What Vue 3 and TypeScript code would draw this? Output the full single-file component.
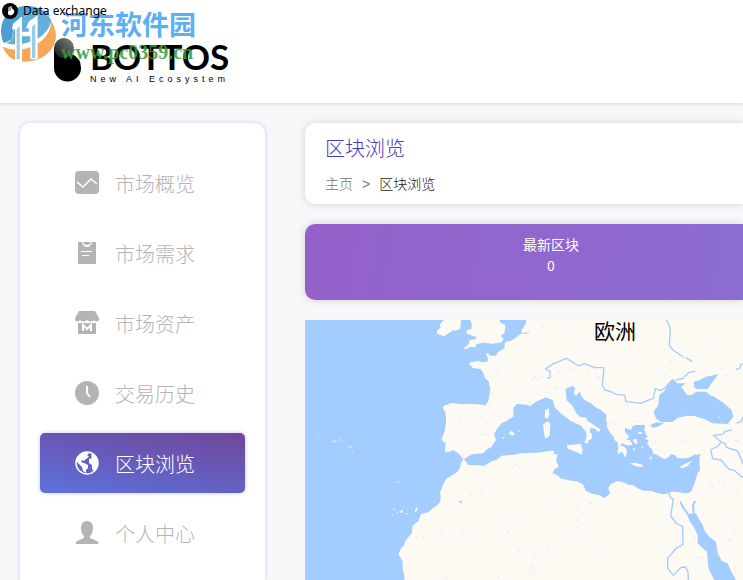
<script setup lang="ts">
interface NavItem {
  label: string
  icon: 'chart' | 'clipboard' | 'shop' | 'clock' | 'globe' | 'user'
}

const navItems: NavItem[] = [
  { label: '市场概览', icon: 'chart' },
  { label: '市场需求', icon: 'clipboard' },
  { label: '市场资产', icon: 'shop' },
  { label: '交易历史', icon: 'clock' },
  { label: '区块浏览', icon: 'globe' },
  { label: '个人中心', icon: 'user' },
]

const current = '区块浏览'
const latestBlock = 0

// Small lakes, as x, y pairs in map units
const lakes: [number, number][] = [
  [434, 286], [463, 304], [502, 262], [524, 288], [552, 282], [434, 332], [482, 350], [498, 324],
  [506, 371], [524, 322], [535, 340], [545, 342], [446, 367], [473, 402], [555, 214], [560, 222],
  [573, 161], [588, 281], [525, 509], [495, 524], [498, 530], [410, 569], [374, 599], [398, 623],
  [406, 632], [334, 650], [353, 650], [470, 629], [500, 622], [632, 595], [596, 574], [608, 636],
  [322, 734], [586, 734], [422, 775], [578, 767], [640, 691], [620, 440], [632, 434], [650, 456],
  [676, 456], [648, 432], [812, 556], [816, 569], [828, 578], [848, 550], [855, 548], [812, 592],
  [816, 622], [840, 620], [814, 600], [778, 622], [772, 645], [745, 539], [873, 679], [890, 747],
  [726, 674], [692, 689], [687, 702], [685, 732], [678, 740], [682, 759], [688, 751], [671, 760],
  [728, 683], [748, 683], [606, 636], [1168, 650], [1173, 712], [1162, 720], [1184, 710], [1212, 488],
  [1218, 500], [1240, 484], [1256, 497], [1274, 487], [1294, 512], [1284, 616], [1288, 628], [1276, 655],
  [1300, 651], [1270, 660], [1188, 747], [1146, 735], [1140, 362], [1140, 357], [1105, 365], [1100, 355],
  [1050, 362], [1188, 345], [1296, 360], [1290, 362], [1250, 340], [1240, 290], [1200, 90], [1250, 145],
  [1264, 165], [1128, 108], [1096, 122], [960, 137], [920, 95], [1042, 15], [1052, 10], [954, 22],
  [712, 20], [784, 22], [820, 53], [710, 91], [888, 40], [698, 176], [708, 170], [722, 188],
  [752, 199], [720, 215], [744, 215], [745, 202], [762, 150], [756, 157], [788, 147], [800, 145],
  [650, 228], [680, 176], [686, 168], [848, 164], [872, 168], [880, 172], [984, 287], [920, 308],
  [948, 295], [930, 310], [1062, 165], [1076, 164],
]
</script>

<template>
  <div class="page">
    <header class="header">
      <a class="brand" href="#" aria-label="BOTTOS">
        <svg class="brand-mark" viewBox="0 0 28 44" aria-hidden="true">
          <defs>
            <linearGradient id="markTop" x1="1" y1="0" x2="0" y2="1">
              <stop offset="0" stop-color="#888" />
              <stop offset="1" stop-color="#111" />
            </linearGradient>
          </defs>
          <path d="M0 10V30A13.500 13.500 0 0 0 27 30Q27 20 18 16 10 14 6 10Z" fill="#000" />
          <circle cx="10" cy="10" r="10" fill="url(#markTop)" />
        </svg>
        <span class="brand-text">
          <span class="brand-name">BOTTOS</span>
          <span class="brand-tag">New AI Ecosystem</span>
        </span>
      </a>

      <div class="window-title">
        <svg viewBox="0 0 16 16" aria-hidden="true">
          <circle cx="8" cy="8" r="8" fill="#050505" />
          <path d="M6 5 9 3Q10 6 12 7 13 10 10 12 7 13 6 11Z" fill="#fff" />
          <path d="M6 5 9 3V7L6 9Z" fill="#999" />
        </svg>
        <span>Data exchange</span>
      </div>

      <div class="watermark">
        <svg viewBox="0 0 168 168" aria-hidden="true">
          <path d="M8 122Q25 168 78 167 145 163 165 108 174 77 154 46 151 91 108 116 54 143 8 122Z" fill="#f59a3c" />
          <path d="M4 88Q-3 47 30 16 72-11 117 7 140 16 151 31 103 7 64 38 33 65 38 98 27 105 12 111 5 102 4 88Z" fill="#2f8fc9" />
          <path d="M17 112Q62 123 112 99 145 80 154 46 150 30 132 22 90 14 60 42 36 66 38 98 28 108 17 112Z" fill="#4ba3d5" />
          <path d="M39 53 66 31V168H45V70H36ZM86 47 113 27V160H91V91H64V77H86V67H78Z" fill="#fff" />
          <path d="M50 69 59 60V160H50ZM96 62 106 53V156H96Z" fill="#8ac4e2" />
        </svg>
        <span class="watermark-text">
          <span class="watermark-name">河东软件园</span>
          <span class="watermark-url">www.pc0359.cn</span>
        </span>
      </div>
    </header>

    <div class="body">
      <nav class="sidebar" aria-label="主导航">
        <a
          v-for="item in navItems"
          :key="item.label"
          href="#"
          class="nav-item"
          :class="{ active: item.label === current }"
        >
          <svg class="nav-icon" viewBox="0 0 24 24" aria-hidden="true">
            <template v-if="item.icon === 'chart'">
              <rect x="0" y="0" width="24" height="23" rx="4" fill="currentColor" />
              <path d="M2 11 8 16 16 8 22 13" fill="none" stroke="#fff" stroke-width="1.500" />
            </template>
            <template v-else-if="item.icon === 'clipboard'">
              <path d="M3 1H7Q8 6 12 6T17 1H21V23H3Z" fill="currentColor" />
              <path d="M8 1H16Q15 4 12 4T8 1Z" fill="currentColor" />
              <path d="M6 10.500H17M7 14.500H14" stroke="#fff" stroke-width="1" />
            </template>
            <template v-else-if="item.icon === 'shop'">
              <path d="M4 0H20L24 7V9Q22 12 19 9 16 12 12 9 8 12 5 9 2 12 0 9V7ZM3 12H21V23H3Z" fill="currentColor" />
              <path d="M8 20V14L12 18 16 14V20" fill="none" stroke="#fff" stroke-width="2" />
            </template>
            <template v-else-if="item.icon === 'clock'">
              <circle cx="12" cy="12" r="12" fill="currentColor" />
              <path d="M12 5V12L15 16" fill="none" stroke="#fff" stroke-width="2" />
            </template>
            <template v-else-if="item.icon === 'globe'">
              <circle cx="12" cy="12" r="11" fill="none" stroke="currentColor" stroke-width="1.500" />
              <path d="M2 7Q6 1 12 1L14 3 12 4 14 6 11 8 9 10 7 9 6 11 9 12 13 14 13 17 11 19 11 22 8 20 7 16 4 13 2 11Z" fill="currentColor" />
              <path d="M17 2Q22 5 23 11 23 17 19 20L17 18 17 14 14 12 14 8 17 7 16 5Z" fill="currentColor" />
            </template>
            <template v-else>
              <path d="M12 0Q18 0 18 7 18 12 15 15V17L22 20Q24 21 23 23H1Q0 21 2 20L9 17V15Q6 12 6 7 6 0 12 0Z" fill="currentColor" />
            </template>
          </svg>
          <span class="nav-label">{{ item.label }}</span>
        </a>
      </nav>

      <main class="main">
        <section class="card heading">
          <h1>{{ current }}</h1>
          <div class="crumbs">
            <a href="#">主页</a>
            <span class="sep">&gt;</span>
            <span class="here">{{ current }}</span>
          </div>
        </section>

        <section class="card stats">
          <div class="stat">
            <span>最新区块</span>
            <span>{{ latestBlock }}</span>
          </div>
        </section>

        <section class="map">
          <svg class="map-canvas" viewBox="0 0 1314 780" preserveAspectRatio="xMinYMin slice" aria-hidden="true">
            <rect width="1314" height="780" class="land" />
            <!-- Atlantic, Channel and North Sea -->
            <path class="sea" d="M0 0H664L661 14 650 30V40L640 47 622 60 600 67 598 85 590 89 576 99 574 107 555 107 549 99 542 100 549 115 547 125 532 127 520 123 506 125 495 127 492 135 502 139 500 144 510 145 528 148 537 163 540 175 552 185 552 195 556 205 553 225 550 243 541 256 520 253 480 251 470 253 438 248 431 253 416 257 414 265 420 275 422 285 424 305 422 315 419 333 410 357 413 363 422 370 420 397 438 394 445 390 463 403 475 418 468 430 465 443 457 455 440 467 425 475 413 495 410 508 405 515 407 535 405 547 395 557 385 563 370 577 348 582 340 603 323 617 320 640 303 660 296 677 288 685 280 703 285 712 293 725V750L298 765V780H0Z" />
            <!-- Mediterranean -->
            <path class="sea" d="M477 418 485 412 500 403 535 400 543 390 560 380 573 360 567 343 577 325 590 310 605 302 625 290V265L635 252 648 253 662 254 676 258 693 245 723 232 743 240 750 263 773 285 798 303 828 317 843 335 845 350 838 367 848 372 850 362 861 355 860 342 855 337 856 323 870 326 878 335 885 333 885 327 863 313 847 302 844 293 825 290 813 278 803 258 785 241 781 207 803 198 810 204 806 220 813 228 820 218 826 217 830 230 842 242 858 250 870 261 888 270 905 285 903 300 906 308 905 320 916 340 925 348 928 360 938 367 940 380 938 397 943 404 946 397 953 397 958 409 963 410 966 390 958 380 945 376 952 370 965 376 983 375 975 361 963 358 973 352 960 335 960 323 978 330 983 318 993 315 1020 315 1018 330 1023 342 1028 350 1019 356 1032 362 1026 370 1035 383 1040 385 1045 401 1053 403 1070 413 1078 417 1088 413 1098 403 1110 405 1118 415 1126 415 1145 415 1158 410 1168 403 1178 405 1188 400 1183 410 1185 450 1178 460 1170 485 1160 512 1150 519 1138 520 1120 516 1098 515 1090 520 1073 523 1055 518 1038 512 1016 512 998 505 985 496 968 494 960 488 938 483 916 493 910 505 915 520 898 535 883 525 860 521 843 513 833 492 815 484 798 482 766 475 760 467 743 460 748 448 761 440 753 420 758 403 745 402 749 392 738 392 698 398 648 400 625 404 590 407 577 418 557 425 537 438 520 436 490 435Z" />
            <g transform="translate(648 -15)">
              <!-- Black Sea, Azov, Marmara -->
              <path class="sea" d="M398 290 412 270 415 240 430 228 438 210 450 195 458 192 468 205 495 205 480 215 498 240 512 240 525 230 555 230 570 242 580 245 605 262 632 285 637 305 620 327 575 325 550 312 540 310 520 303 500 302 470 308 455 320 420 322 405 310ZM520 218 530 222H560L572 205 592 178 580 180 555 185 535 196 518 200ZM388 330 405 322 430 325 410 335 395 338Z" />
              <!-- Red Sea -->
              <path class="sea" d="M497 597 525 595 532 609 545 630 552 650 565 665 585 680 590 715 602 737 620 745 630 768 645 795H580L562 760 558 710 545 700 530 685V660L518 635 508 622Z" />
              <path class="river wide" d="M478 560 485 575 500 597M523 558 516 571 518 595" />
              <!-- Aegean and Mediterranean islands -->
              <path class="land" d="M73 285 83 280 85 300 80 312 71 308ZM66 328 82 319 88 327 86 362 74 371 70 361ZM137 390 150 389 180 387 185 404 182 419 165 410 140 401ZM326 445 342 443 365 449 365 456 344 454ZM474 457 491 447 515 437 499 454 485 460ZM335 374 346 371 350 384 343 388ZM352 352 362 350 364 356 354 358ZM334 402 342 400 341 408ZM360 396 366 394 367 400ZM385 428 393 422 389 436Z" />
              <!-- Rivers -->
              <path class="river" d="M78 188 87 189V169L73 162 98 146 137 130 173 153 190 146 222 158H249L244 211 252 225 272 231 286 238 312 241 314 259 359 265 380 256 397 250 403 221 419 227 438 213" />
              <path class="river" d="M436 15 448 40 445 91 456 105 488 127M465 195 486 190 504 172 523 169M494 128 514 140M645 164 657 159 660 148 666 146" />
              <path class="river" d="M443 533 450 550 457 552 449 603 468 627 485 634 486 688 466 699 440 730V760L458 781 480 757 494 756 501 771 502 795" />
              <path class="river" d="M632 344 610 351 606 358 577 361 600 380 592 393 569 405 575 431 600 435 624 463 639 466 666 488M597 380 613 386 616 397 650 408 666 446M647 324 660 320 666 306" />
            </g>
            <!-- Ireland, Great Britain, Balearics, Canaries -->
            <path class="land" d="M416 0H468L466 26 453 32 445 30 417 49 407 45 397 42 395 34 406 23 405 13ZM496 0H582L588 9 601 15 599 38 587 48 596 57 590 67 562 71 534 68 515 72 511 82 496 80 482 88 474 86 491 73 495 60 510 58 516 50 505 49 483 39 486 30 500 27 500 10ZM610 339 620 333 630 341 622 348ZM592 353 598 351 596 358ZM284 575 292 569 294 575 288 579ZM329 577 333 563 338 563 334 575ZM300 581 305 578 308 584ZM264 567 270 565 268 571Z" />
            <path class="sea" d="M643 5H652L650 25 640 29ZM651 40 675 36 670 39 656 43ZM463 543 470 542 472 547 463 549Z" />
            <!-- Azores, Madeira and other small islands -->
            <path class="isle" d="M36 344h6v3h-6ZM80 362h8l6-2v5l-9 4ZM103 358h7v4h-7ZM130 379h12v4h-12ZM140 397h5v4h-5ZM276 484h7v4h-7ZM262 583h5v4h-5ZM274 577h5v4h-5ZM639 331h6v4h-6Z" />
            <rect v-for="([x, y], i) in lakes" :key="i" class="lake" :x="x" :y="y" width="5" height="4" />
          </svg>
          <span class="map-label">欧洲</span>
        </section>
      </main>
    </div>
  </div>
</template>

<style>
body {
  margin: 0;
}
</style>

<style scoped>
.page {
  display: flex;
  flex-direction: column;
  height: 100vh;
  overflow: hidden;
  background: #f8f8fb;
  font-family: "Liberation Sans", "Noto Sans CJK SC", sans-serif;
  font-weight: 300;
}

.header {
  position: relative;
  flex: none;
  display: flex;
  box-sizing: border-box;
  height: 103px;
  padding: 38px 0 0 54px;
  background: #fff;
  box-shadow: 0 1px 3px rgba(0, 0, 0, 0.14);
}

.brand {
  display: flex;
  align-items: flex-start;
  gap: 8px;
  color: #000;
  text-decoration: none;
}

.brand-mark {
  width: 28px;
  height: 44px;
}

.brand-text {
  display: flex;
  flex-direction: column;
}

.brand-name {
  font: 700 35px/37px Lato, sans-serif;
}

.brand-tag {
  font: 9px/8px "Liberation Sans", sans-serif;
  letter-spacing: 4px;
  white-space: nowrap;
}

.window-title {
  position: absolute;
  z-index: 1;
  top: 3px;
  left: 2px;
  display: flex;
  align-items: center;
  gap: 5px;
  color: #000;
  font: 12px/16px "Noto Sans", sans-serif;
}

.window-title svg {
  width: 16px;
  height: 16px;
}

.watermark {
  position: absolute;
  top: 6px;
  left: 0;
  display: flex;
  gap: 5px;
  opacity: 0.85;
}

.watermark svg {
  width: 56px;
  height: 56px;
}

.watermark-text {
  display: flex;
  flex-direction: column;
}

.watermark-name {
  color: #3ea3f2;
  font: 700 27px/36px "Noto Sans CJK SC", sans-serif;
}

.watermark-url {
  color: #319c38;
  font: 700 20px/20px "Liberation Serif", serif;
}

.body {
  flex: 1;
  display: flex;
  gap: 40px;
  min-height: 0;
  padding: 20px 0 0 20px;
}

.sidebar {
  flex: none;
  display: flex;
  flex-direction: column;
  gap: 10px;
  box-sizing: border-box;
  width: 245px;
  padding: 30px 20px;
  border-radius: 10px 10px 0 0;
  background: #fff;
  box-shadow: 0 0 5px rgba(100, 90, 255, 0.3);
}

.nav-item {
  flex: none;
  display: flex;
  align-items: center;
  gap: 16px;
  height: 60px;
  padding-left: 35px;
  border-radius: 5px;
  color: #b4b4b4;
  font-size: 20px;
  line-height: 24px;
  text-decoration: none;
}

.nav-item.active {
  background: linear-gradient(10deg, #5c72dc, #70469a);
  box-shadow: 0 0 4px rgba(90, 90, 230, 0.35);
  color: #fff;
}

.nav-icon {
  width: 24px;
  height: 24px;
}

.nav-label {
  padding-top: 4px;
}

.main {
  flex: 1;
  display: flex;
  flex-direction: column;
  gap: 20px;
  min-width: 0;
}

.card {
  flex: none;
  border-radius: 10px 0 0 10px;
  box-shadow: 0 0 8px rgba(0, 0, 0, 0.16);
}

.heading {
  display: flex;
  flex-direction: column;
  gap: 12px;
  padding: 14px 20px 10px;
  background: #fff;
}

.heading h1 {
  margin: 0;
  color: #4c3cb4;
  font-size: 20px;
  font-weight: 300;
  line-height: 25px;
}

.crumbs {
  display: flex;
  gap: 9px;
  color: #777;
  font-size: 14px;
  line-height: 20px;
}

.crumbs a {
  color: #777;
  text-decoration: none;
}

.crumbs .here {
  color: #222;
}

.stats {
  box-sizing: border-box;
  min-height: 76px;
  padding: 10px 0;
  overflow: hidden;
  background: linear-gradient(100deg, #9460ca, #8c6dd2);
}

.stat {
  display: flex;
  flex-direction: column;
  align-items: center;
  min-width: 492px;
  color: #fff;
  font-family: "Noto Sans CJK SC", sans-serif;
  font-size: 14px;
  font-weight: 400;
  line-height: 21px;
}

.map {
  position: relative;
  flex: 1;
  min-height: 0;
}

.map-canvas {
  display: block;
  width: 100%;
  height: 100%;
}

.land {
  fill: #fdfaf3;
}

.sea {
  fill: #a3ccff;
}

.isle {
  fill: #d5e4f4;
}

.lake {
  fill: #dfeaf5;
}

.river {
  fill: none;
  stroke: #a3ccff;
  stroke-width: 4;
  stroke-linejoin: round;
}

.river.wide {
  stroke-width: 6;
}

.map-label {
  position: absolute;
  top: 0;
  left: 66%;
  color: #000;
  font-size: 21px;
  font-weight: 400;
  line-height: 24px;
  text-shadow: 0 0 2px #fff;
}
</style>
